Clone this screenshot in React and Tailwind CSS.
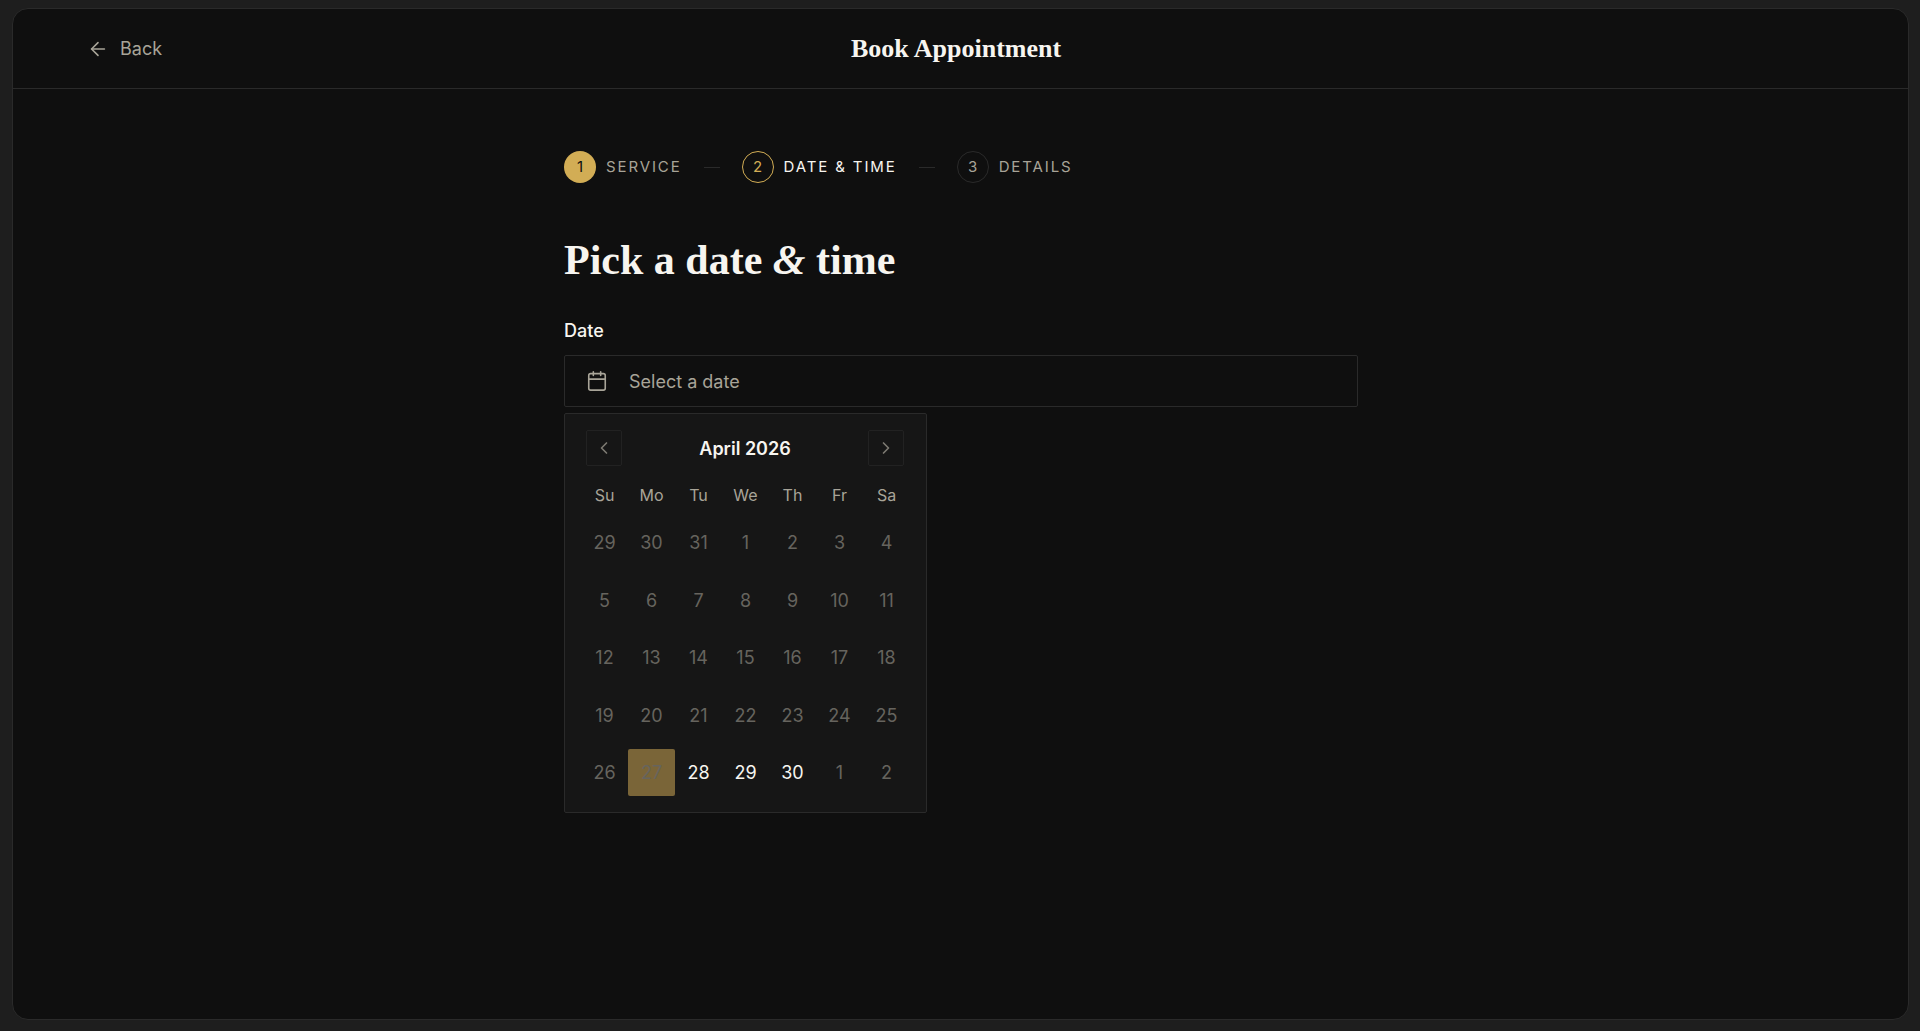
import { ArrowLeft, Calendar, ChevronLeft, ChevronRight } from "lucide-react";

const weekdays = ["Su", "Mo", "Tu", "We", "Th", "Fr", "Sa"];
const days = [
  29, 30, 31, 1, 2, 3, 4,
  5, 6, 7, 8, 9, 10, 11,
  12, 13, 14, 15, 16, 17, 18,
  19, 20, 21, 22, 23, 24, 25,
  26, 27, 28, 29, 30, 1, 2,
];

function Step({ number, label, state }) {
  return (
    <div className="flex items-center gap-2.5">
      {state === "done" && (
        <div className="w-8 h-8 rounded-full flex items-center justify-center text-[15px] bg-[#d2ad55] text-[#0f0f0f]">
          {number}
        </div>
      )}
      {state === "active" && (
        <div className="w-8 h-8 rounded-full flex items-center justify-center text-[15px] border-[1.5px] border-[#d2ad55] text-[#d2ad55]">
          {number}
        </div>
      )}
      {state === "todo" && (
        <div className="w-8 h-8 rounded-full flex items-center justify-center text-[15px] border border-[#2a2a2a] text-[#a8a498]">
          {number}
        </div>
      )}
      <span
        className={
          state === "active"
            ? "text-[15px] tracking-[0.125em] text-[#f7f5f0]"
            : "text-[15px] tracking-[0.125em] text-[#a8a498]"
        }
      >
        {label}
      </span>
    </div>
  );
}

function Calendar2() {
  return (
    <div className="w-[363px] mt-[6px] p-4 bg-[#161616] border border-[#2a2a2a] rounded-[2px]">
      <div className="flex items-center justify-between pl-[5px] pr-[6px]">
        <button className="w-9 h-9 flex items-center justify-center border border-[#222222] rounded-[2px] text-[#7d7a72]">
          <ChevronLeft size={20} strokeWidth={2} />
        </button>
        <span className="text-[18px] font-semibold text-[#f7f5f0]">April 2026</span>
        <button className="w-9 h-9 flex items-center justify-center border border-[#222222] rounded-[2px] text-[#7d7a72]">
          <ChevronRight size={20} strokeWidth={2} />
        </button>
      </div>
      <div className="grid grid-cols-[repeat(7,47px)] mt-[18px]">
        {weekdays.map((d) => (
          <div key={d} className="h-[21px] flex items-center justify-center text-[16px] text-[#a8a498]">
            {d}
          </div>
        ))}
      </div>
      <div className="grid grid-cols-[repeat(7,47px)] auto-rows-[47px] gap-y-[10.5px] mt-[14px]">
        {days.map((d, i) => {
          const open = i >= 30 && i <= 32;
          const today = i === 29;
          return (
            <div
              key={i}
              className={
                today
                  ? "flex items-center justify-center text-[18px] rounded-[2px] bg-[#7a6538] text-[#66645e]"
                  : open
                  ? "flex items-center justify-center text-[18px] text-[#f7f5f0]"
                  : "flex items-center justify-center text-[18px] text-[#66645e]"
              }
            >
              {d}
            </div>
          );
        })}
      </div>
    </div>
  );
}

export default function App() {
  return (
    <div className="h-screen pl-3 pr-[11px] pt-2 pb-[11px] bg-[#1e1e1e] font-[family-name:Inter,sans-serif]">
      <div className="h-full border border-[#2a2a2a] rounded-2xl bg-[#0f0f0f] overflow-hidden">
        <header className="h-20 px-[74px] flex items-center justify-between border-b border-[#2a2a2a]">
          <button className="flex items-center gap-[11px] text-[18px] text-[#a8a498]">
            <ArrowLeft size={22} strokeWidth={1.75} />
            Back
          </button>
          <h1 className="font-[family-name:'Liberation_Serif',serif] font-bold text-[26px] text-[#f7f5f0]">
            Book Appointment
          </h1>
          <div className="w-[84px]" />
        </header>

        <main className="w-[794px] ml-[551px] pt-[62px]">
          <div className="flex items-center gap-[22px]">
            <Step number="1" label="SERVICE" state="done" />
            <div className="w-4 h-px bg-[#2a2a2a]" />
            <Step number="2" label="DATE & TIME" state="active" />
            <div className="w-4 h-px bg-[#2a2a2a]" />
            <Step number="3" label="DETAILS" state="todo" />
          </div>

          <h2 className="mt-[49px] font-[family-name:'Liberation_Serif',serif] font-bold text-[42px] leading-[56px] text-[#f7f5f0]">
            Pick a date <span className="italic">&amp;</span> time
          </h2>

          <label className="block mt-[29px] text-[18px] font-medium text-[#f7f5f0]">Date</label>
          <div className="mt-[11px] h-[52px] px-[21px] flex items-center gap-[21px] border border-[#2a2a2a] rounded-[2px] text-[#a8a498]">
            <Calendar size={22} strokeWidth={1.75} />
            <span className="text-[18px]">Select a date</span>
          </div>
          <Calendar2 />
        </main>
      </div>
    </div>
  );
}
